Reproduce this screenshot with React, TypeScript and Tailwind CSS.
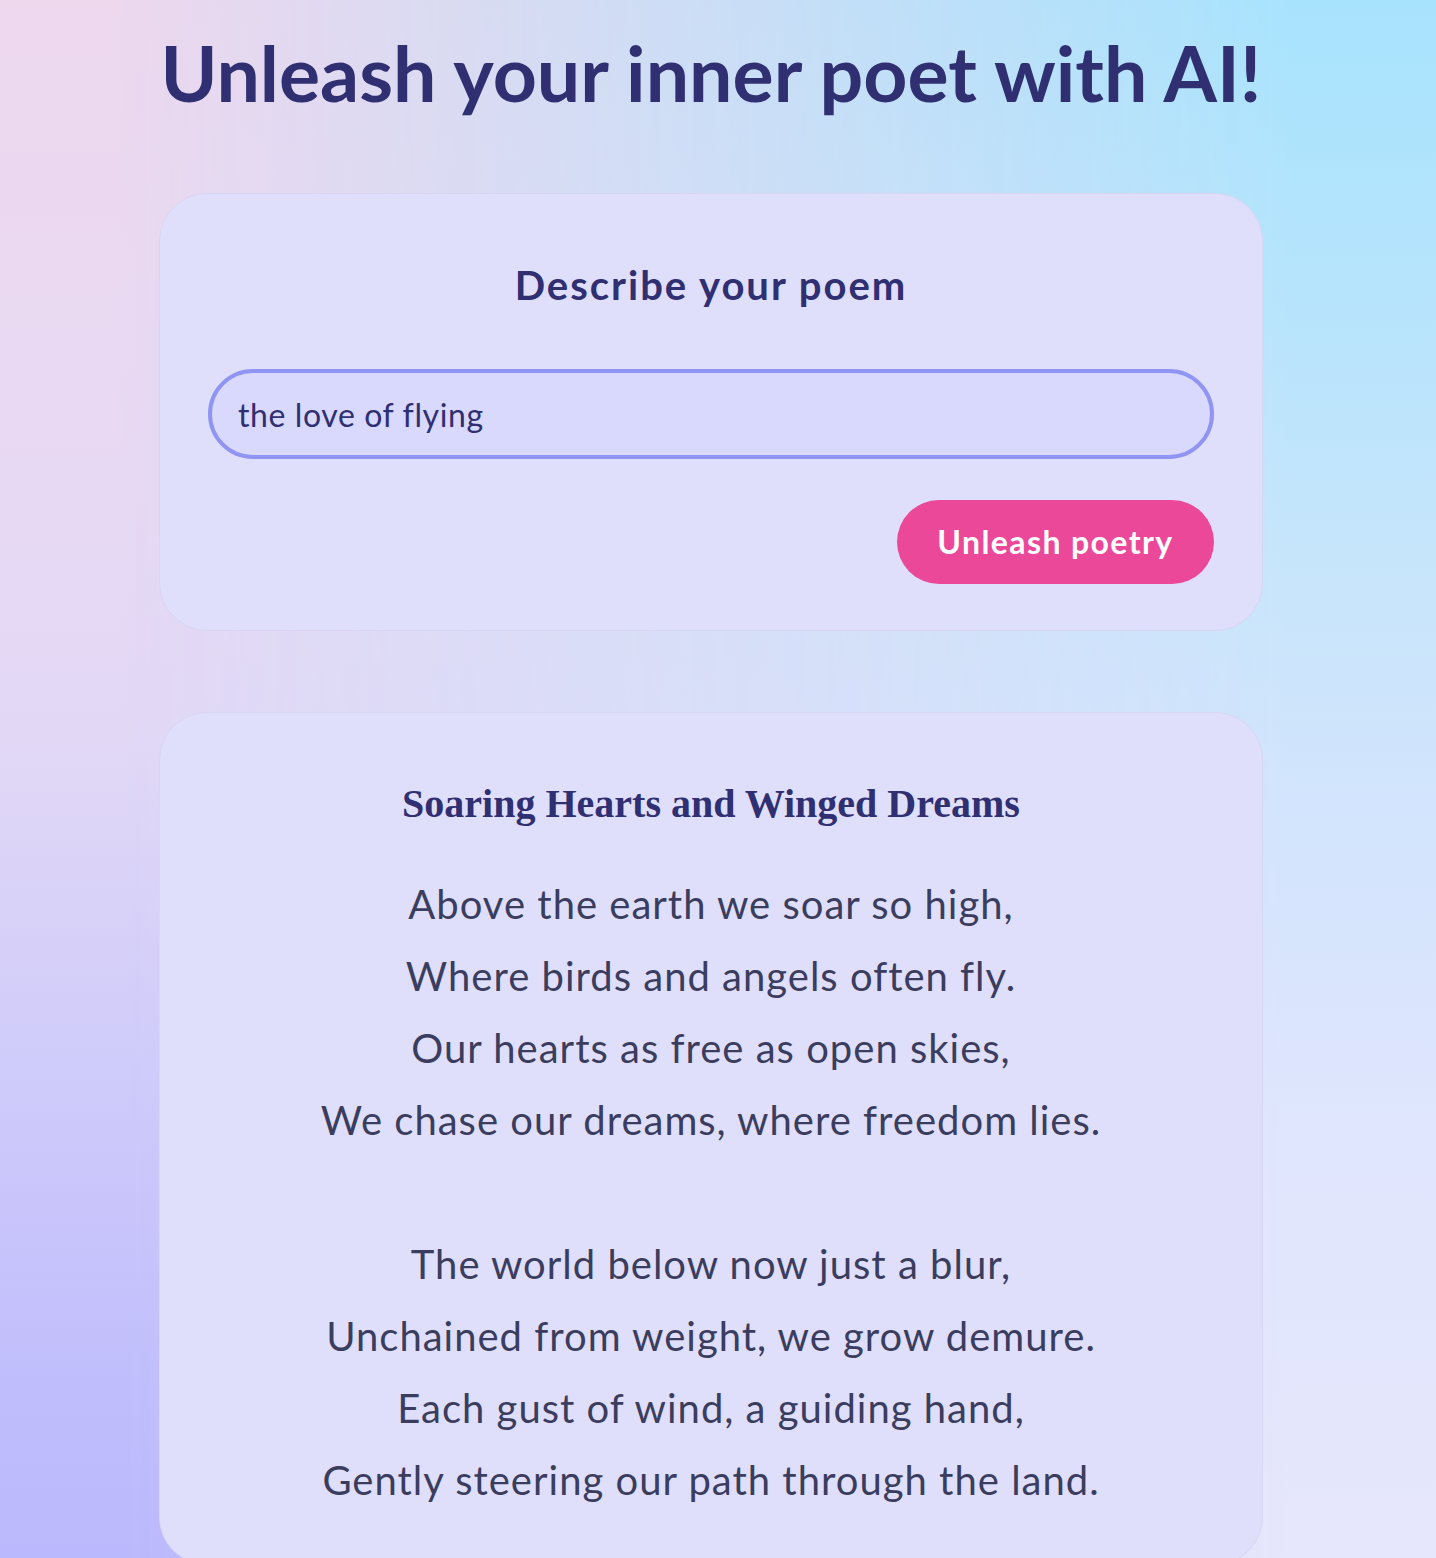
import React, { useState } from 'react';

const poem = `Above the earth we soar so high,
Where birds and angels often fly.
Our hearts as free as open skies,
We chase our dreams, where freedom lies.

The world below now just a blur,
Unchained from weight, we grow demure.
Each gust of wind, a guiding hand,
Gently steering our path through the land.`;

export default function App() {
    const [topic, setTopic] = useState('the love of flying');

    return (
        <div className="relative min-h-screen pr-[14px] font-['Lato','Open_Sans',sans-serif] bg-[linear-gradient(to_bottom,#edd8ee_0%,#e9d9f3_26%,#e2d8f6_45%,#d0ccfa_64%,#c1befc_83%,#b8b6fd_100%)]">
            {/* blue wash from the right */}
            <div className="pointer-events-none absolute inset-0 bg-[linear-gradient(to_bottom,#a8e3fd_0%,#b7e4fc_19%,#cae5fb_38%,#d4e4fd_52%,#e0e6fd_70%,#e7e7fb_100%)] [mask-image:linear-gradient(to_right,transparent_8%,rgba(0,0,0,0.5)_50%,black_90%)]" />

            <div className="relative mx-auto w-[1104px] pt-[28px] pb-20">
                {/* Title */}
                <h1 className="text-center text-[77px] leading-[88px] font-bold text-[#2f2f72]">
                    Unleash your inner poet with AI!
                </h1>

                {/* Prompt card */}
                <section className="mt-[77px] rounded-[48px] border border-[#d8d6f3] bg-[#dfdffb] px-12 pt-[71px] pb-[46px]">
                    <h2 className="text-center text-[40px] leading-[40px] font-bold tracking-[2px] text-[#2f2f72]">
                        Describe your poem
                    </h2>
                    <input
                        value={topic}
                        onChange={(e) => setTopic(e.target.value)}
                        className="mt-[64px] block h-[90px] w-full rounded-full border-4 border-[#9094f2] bg-[#d8d9fc] px-[26px] text-[32px] tracking-[0.6px] text-[#2f2f72] outline-none"
                    />
                    <div className="mt-[41px] flex justify-end">
                        <button className="h-[84px] w-[317px] rounded-full bg-[#eb4899] text-[32px] font-bold tracking-[1.4px] text-white">
                            Unleash poetry
                        </button>
                    </div>
                </section>

                {/* Poem card */}
                <section className="mt-[81px] rounded-[48px] border border-[#d8d6f3] bg-[#dfdffb] px-12 pt-[71px] pb-12">
                    <h3 className="text-center font-['Liberation_Serif',serif] text-[40px] leading-[40px] font-bold text-[#2f2f72]">
                        Soaring Hearts and Winged Dreams
                    </h3>
                    <p className="mt-[44px] whitespace-pre-line text-center text-[40px] leading-[72px] tracking-[1px] text-[#3b3d5e]">
                        {poem}
                    </p>
                </section>
            </div>
        </div>
    );
}
